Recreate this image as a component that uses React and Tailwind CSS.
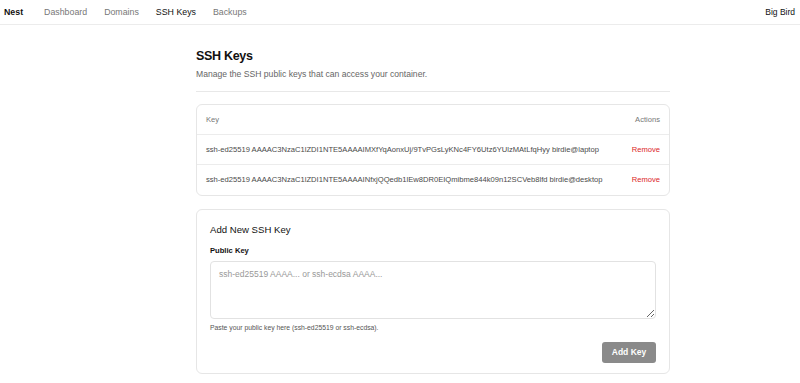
import React from 'react';

const keys = [
  { id: 1, value: 'ssh-ed25519 AAAAC3NzaC1lZDI1NTE5AAAAIMXfYqAonxUj/9TvPGsLyKNc4FY6Utz6YUlzMAtLfqHyy birdie@laptop' },
  { id: 2, value: 'ssh-ed25519 AAAAC3NzaC1lZDI1NTE5AAAAINfxjQQedb1lEw8DR0EIQmibme844k09n12SCVeb8lfd birdie@desktop' },
];

export default function App() {
  return (
    <div className="min-h-screen bg-white text-[#111] font-['Liberation_Sans',Arial,sans-serif]">
      <nav className="h-[25px] border-b border-[#ececec] flex items-center justify-between pl-[4px] pr-[5px]">
        <div className="flex items-center text-[8.8px] leading-[11px]">
          <span className="font-bold text-[#111] mr-[21px]">Nest</span>
          <span className="text-[#777] mr-[17px]">Dashboard</span>
          <span className="text-[#777] mr-[17px]">Domains</span>
          <span className="text-[#111] font-medium mr-[17px]">SSH Keys</span>
          <span className="text-[#777]">Backups</span>
        </div>
        <span className="text-[8.5px] font-medium text-[#111]">Big Bird</span>
      </nav>

      <main className="pl-[196px] pt-[23px]">
        <div className="w-[474px]">
          <h1 className="text-[12.5px] font-bold tracking-[-0.3px] leading-[16px]">SSH Keys</h1>
          <p className="text-[8.6px] text-[#666] mt-[5px] leading-[11px]">Manage the SSH public keys that can access your container.</p>
          <div className="border-t border-[#e8e8e8] mt-[11px]" />

          <div className="mt-[12px] border border-[#e6e6e6] rounded-[6px] text-[7.6px]">
            <div className="h-[30px] flex items-center justify-between px-[9px] text-[#777] border-b border-[#ececec]">
              <span>Key</span>
              <span>Actions</span>
            </div>
            {keys.map((k, i) => (
              <div key={k.id} className={`h-[30px] flex items-center justify-between px-[9px] ${i === 0 ? 'border-b border-[#ececec]' : ''}`}>
                <span className="text-[#4a4a4a]">{k.value}</span>
                <button className="text-[#dc2626] font-medium">Remove</button>
              </div>
            ))}
          </div>

          <div className="mt-[13px] border border-[#e6e6e6] rounded-[6px] px-[13px] pt-[14px] pb-[10px]">
            <h2 className="text-[9.6px] font-medium leading-[12px]">Add New SSH Key</h2>
            <label className="block text-[7.6px] font-bold mt-[10px] leading-[10px]">Public Key</label>
            <textarea
              className="block w-full h-[58px] mt-[5px] border border-[#e2e2e2] rounded-[4px] px-[8px] py-[6px] text-[8.5px] placeholder-[#999] resize-y"
              placeholder="ssh-ed25519 AAAA... or ssh-ecdsa AAAA..."
            />
            <p className="text-[6.8px] text-[#555] mt-[4px] leading-[9px]">Paste your public key here (ssh-ed25519 or ssh-ecdsa).</p>
            <div className="flex justify-end mt-[10px]">
              <button className="w-[54px] h-[21px] bg-[#8a8a8a] text-white text-[8.5px] font-bold rounded-[3px]">Add Key</button>
            </div>
          </div>
        </div>
      </main>
    </div>
  );
}
